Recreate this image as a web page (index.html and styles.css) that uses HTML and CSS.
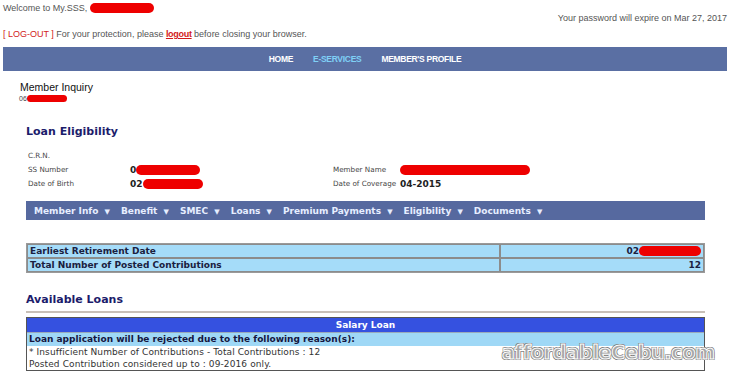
FILE: index.html
```html
<!DOCTYPE html>
<html lang="en">

<head>
    <meta charset="UTF-8">
    <title>My.SSS - Loan Eligibility</title>
    <link rel="stylesheet" href="styles.css">
</head>

<body>
    <div class="page">
        <div class="top">
            <div class="welcome">Welcome to My.SSS, <span class="redact w63"></span></div>
            <div class="expire">Your password will expire on Mar 27, 2017</div>
            <div class="logout-line"><span class="red">[ LOG-OUT ]</span> For your protection, please <a href="#" class="red">logout</a> before closing your browser.</div>
        </div>

        <div class="main-nav">
            <a href="#">HOME</a>
            <a href="#" class="current">E-SERVICES</a>
            <a href="#">MEMBER'S PROFILE</a>
        </div>

        <div class="inquiry">
            <div class="inquiry-title">Member Inquiry</div>
            <div class="inquiry-id">06<span class="redact w40 small"></span></div>
        </div>

        <div class="content">
            <h2>Loan Eligibility</h2>

            <div class="info">
                <div class="info-row">
                    <span class="lbl">C.R.N.</span>
                </div>
                <div class="info-row">
                    <span class="lbl">SS Number</span>
                    <span class="val">0<span class="redact w63"></span></span>
                    <span class="lbl">Member Name</span>
                    <span class="val"><span class="redact w130"></span></span>
                </div>
                <div class="info-row">
                    <span class="lbl">Date of Birth</span>
                    <span class="val">02<span class="redact w55"></span></span>
                    <span class="lbl">Date of Coverage</span>
                    <span class="val">04-2015</span>
                </div>
            </div>

            <div class="sub-nav">
                <span>Member Info <small>&#9660;</small></span>
                <span>Benefit <small>&#9660;</small></span>
                <span>SMEC <small>&#9660;</small></span>
                <span>Loans <small>&#9660;</small></span>
                <span>Premium Payments <small>&#9660;</small></span>
                <span>Eligibility <small>&#9660;</small></span>
                <span>Documents <small>&#9660;</small></span>
            </div>

            <table class="summary">
                <tr>
                    <td>Earliest Retirement Date</td>
                    <td class="num">02<span class="redact w48"></span></td>
                </tr>
                <tr>
                    <td>Total Number of Posted Contributions</td>
                    <td class="num">12</td>
                </tr>
            </table>

            <h2 class="loans-title">Available Loans</h2>
            <hr>

            <div class="loan-box">
                <div class="loan-head">Salary Loan</div>
                <div class="loan-reason">Loan application will be rejected due to the following reason(s):</div>
                <div class="loan-line">* Insufficient Number of Contributions - Total Contributions : 12</div>
                <div class="loan-line">Posted Contribution considered up to : 09-2016 only.</div>
            </div>
        </div>

        <div class="watermark">affordableCebu.com</div>
    </div>
</body>

</html>
```

FILE: styles.css
```css
body {
    margin: 0;
    padding: 0;
    background: #fff;
    font-family: 'Liberation Sans', Arial, sans-serif;
    color: #555;
}

.page {
    position: relative;
    width: 730px;
    height: 374px;
    overflow: hidden;
}

.top {
    padding: 3px 3px 0 3px;
    font-size: 9px;
    height: 44px;
}

.welcome {
    height: 11px;
    line-height: 11px;
}

.expire {
    text-align: right;
    line-height: 11px;
    margin-top: -1px;
}

.logout-line {
    margin-top: 4px;
    line-height: 12px;
}

.red {
    color: #d21a1a;
}

a.red {
    font-weight: bold;
    text-decoration: underline;
    letter-spacing: -0.3px;
}

.redact {
    display: inline-block;
    height: 10px;
    background: #ee0000;
    border-radius: 6px;
    vertical-align: middle;
    margin-top: -2px;
}

.redact.small {
    height: 7px;
}

.w40 { width: 40px; }
.w48 { width: 62px; }
.w55 { width: 60px; }
.w63 { width: 64px; }
.w130 { width: 130px; }

.main-nav {
    margin: 0 3px;
    height: 24px;
    background: #5a6fa3;
    display: flex;
    justify-content: center;
    align-items: center;
    gap: 20px;
}

.main-nav a {
    color: #fff;
    font-size: 8.5px;
    font-weight: bold;
    text-decoration: none;
    letter-spacing: -0.3px;
}

.main-nav a.current {
    color: #7fd0f6;
}

.inquiry {
    padding: 9px 0 0 19px;
}

.inquiry-title {
    color: #111;
    font-size: 10.5px;
    line-height: 14px;
    padding-left: 1px;
}

.inquiry-id {
    font-size: 7px;
    line-height: 10px;
    color: #444;
}

.content {
    padding: 0 25px 0 26px;
    font-family: 'DejaVu Sans', Verdana, sans-serif;
}

h2 {
    margin: 20px 0 0 0;
    font-size: 11px;
    color: #1c1c6b;
    line-height: 16px;
}

.info {
    margin-top: 9px;
    padding-left: 2px;
    font-size: 7.2px;
    color: #444;
}

.info-row {
    display: grid;
    grid-template-columns: 102px 203px 67px auto;
    height: 14px;
    line-height: 14px;
    white-space: nowrap;
}

.info .val {
    font-size: 9px;
    font-weight: bold;
    color: #222;
}

.sub-nav {
    margin-top: 10px;
    height: 19px;
    background: #56699f;
    display: flex;
    align-items: center;
    padding-left: 8px;
    gap: 11px;
    font-size: 9px;
    font-weight: bold;
    color: #e6eeff;
}

.sub-nav span {
    white-space: nowrap;
}

.sub-nav small {
    font-size: 7px;
    margin-left: 3px;
}

.summary {
    margin-top: 23px;
    width: 100%;
    border-collapse: separate;
    border-spacing: 0;
    border: 1px solid #9a9a9a;
    font-size: 9px;
    font-weight: bold;
    color: #1a2040;
}

.summary td {
    background: #a5dcf9;
    border: 1px solid #8c8c8c;
    height: 12px;
    padding: 0 2px;
    line-height: 12px;
}

.summary td.num {
    width: 198px;
    text-align: right;
}

.loans-title {
    margin-top: 19px;
}

hr {
    margin: 3px 0 0 0;
    border: 0;
    border-top: 2px solid #c8c0b8;
}

.loan-box {
    margin-top: 4px;
    border: 1px solid #555;
    font-size: 9px;
}

.loan-head {
    background: #3551e0;
    color: #fff;
    font-weight: bold;
    text-align: center;
    height: 14px;
    line-height: 14px;
    border-bottom: 1px solid #9ab;
}

.loan-reason {
    background: #9fd8f6;
    color: #15163f;
    font-weight: bold;
    font-size: 9px;
    height: 13px;
    line-height: 13px;
    padding-left: 2px;
}

.loan-line {
    color: #333;
    height: 12px;
    line-height: 12px;
    padding-left: 2px;
    letter-spacing: 0.1px;
}

.watermark {
    position: absolute;
    left: 502px;
    top: 342px;
    font-family: 'DejaVu Sans', sans-serif;
    font-weight: bold;
    font-size: 19px;
    line-height: 20px;
    letter-spacing: -0.2px;
    color: #a8a8a8;
    -webkit-text-stroke: 1px #fff;
    text-shadow: 1px 1px 0 #777, -1px -1px 0 #777, 1px -1px 0 #777, -1px 1px 0 #777;
}
```
